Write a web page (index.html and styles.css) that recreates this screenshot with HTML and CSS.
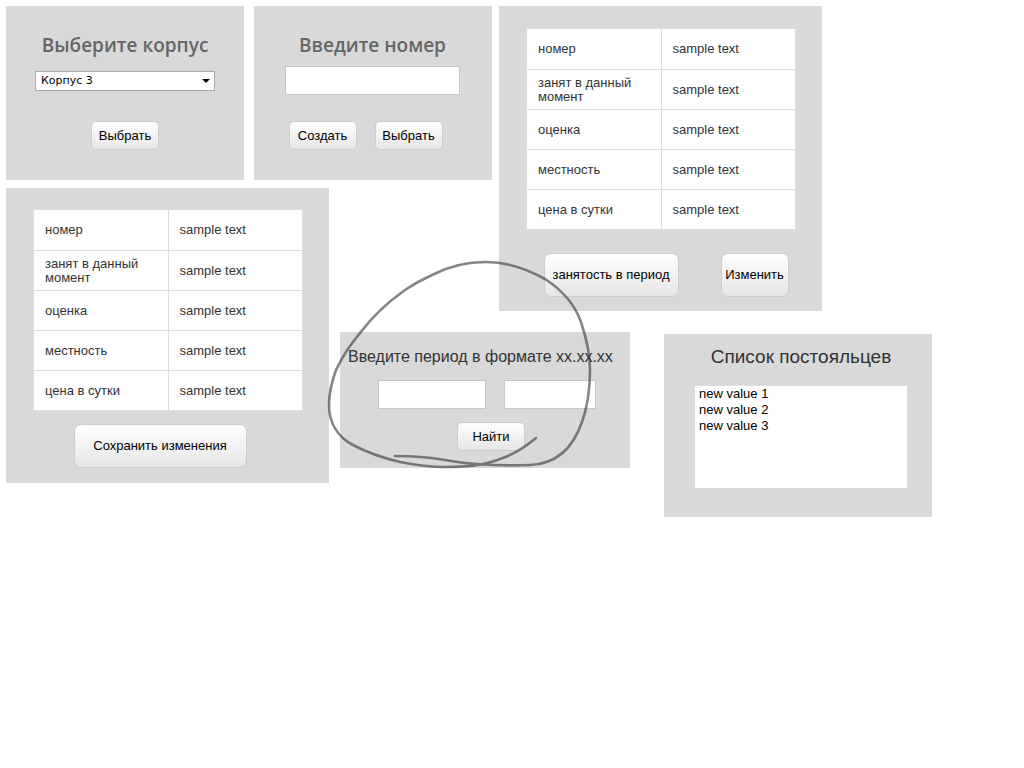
FILE: index.html
```html
<!DOCTYPE html>
<html lang="ru">
<head>
<meta charset="utf-8">
<title>Номера</title>
<link rel="stylesheet" href="styles.css">
</head>
<body>
<main class="board">
  <form class="panel building">
    <h2 class="title"><label for="building">Выберите корпус</label></h2>
    <div class="picker">
      <select id="building"><option>Корпус 3</option></select>
    </div>
    <div class="actions"><button type="button" class="btn">Выбрать</button></div>
  </form>

  <form class="panel room">
    <h2 class="title"><label for="room">Введите номер</label></h2>
    <input class="field" id="room" type="text">
    <div class="actions">
      <button type="button" class="btn">Создать</button>
      <button type="button" class="btn">Выбрать</button>
    </div>
  </form>

  <section class="panel details">
    <table class="props">
      <tr><td>номер</td><td>sample text</td></tr>
      <tr><td>занят в данный момент</td><td>sample text</td></tr>
      <tr><td>оценка</td><td>sample text</td></tr>
      <tr><td>местность</td><td>sample text</td></tr>
      <tr><td>цена в сутки</td><td>sample text</td></tr>
    </table>
    <div class="actions">
      <button type="button" class="btn tall wide">занятость в период</button>
      <button type="button" class="btn tall">Изменить</button>
    </div>
  </section>

  <section class="panel edit">
    <table class="props">
      <tr><td>номер</td><td>sample text</td></tr>
      <tr><td>занят в данный момент</td><td>sample text</td></tr>
      <tr><td>оценка</td><td>sample text</td></tr>
      <tr><td>местность</td><td>sample text</td></tr>
      <tr><td>цена в сутки</td><td>sample text</td></tr>
    </table>
    <div class="actions">
      <button type="button" class="btn tall widest">Сохранить изменения</button>
    </div>
  </section>

  <form class="panel period">
    <h2 class="subtitle">Введите период в формате xx.xx.xx</h2>
    <div class="range">
      <input class="field" type="text" aria-label="Начало периода">
      <input class="field" type="text" aria-label="Конец периода">
    </div>
    <div class="actions"><button type="button" class="btn">Найти</button></div>
  </form>

  <section class="panel guests">
    <h2 class="heading"><label for="guests">Список постояльцев</label></h2>
    <select class="list" id="guests" size="6">
      <option>new value 1</option>
      <option>new value 2</option>
      <option>new value 3</option>
    </select>
  </section>

  <svg class="sketch" viewBox="320 250 290 230" width="290" height="230" aria-hidden="true">
    <path d="M536 438C524 448 512 455 500 459C482 466 465 467 445 467C429 467 415 465 400 462C383 458 368 453 353 445C338 437 329 423 329 405C329 392 332 381 336 370C343 355 350 345 360 333C372 317 388 302 405 290C414 284 423 279 432 275C449 266 465 262 486 262C508 262 527 269 545 279C562 290 575 305 581 322C587 340 590 355 590 370C590 390 587 408 582 422C573 448 556 464 530 465C505 466 472 465 445 460C428 457 412 456 395 456"/>
  </svg>
</main>
</body>
</html>
```
FILE: styles.css
```css
* { box-sizing: border-box; }
body {
  margin: 0;
  background: #fff;
  color: #333;
  font: 13px/14px "Liberation Sans", Arial, sans-serif;
}
h2 { margin: 0; font-weight: normal; text-align: center; white-space: nowrap; }

.board {
  position: relative;
  display: grid;
  grid-template-columns: 238fr 10fr 75fr 11fr 152fr 7fr 131fr 34fr 158fr 110fr 92fr;
  grid-template-rows: auto 1fr auto;
  align-items: start;
  padding: 6px 0 0 6px;
}
.panel {
  display: flex;
  flex-direction: column;
  min-width: 0;
  background: #d9d9d9;
}
.building { grid-area: 1 / 1 / 2 / 2; margin-bottom: 8px; padding: 24px 29px 30px; }
.room { grid-area: 1 / 3 / 2 / 6; margin-bottom: 8px; padding: 24px 32px 30px 31px; }
.details { grid-area: 1 / 7 / 3 / 10; margin-bottom: 21px; padding: 22px 26px 14px 27px; }
.edit { grid-area: 2 / 1 / 4 / 4; padding: 21px 26px 15px 27px; }
.period { grid-area: 3 / 5 / 4 / 8; padding: 15px 8px 17px; }
.guests { grid-area: 3 / 9 / 4 / 11; margin-top: 2px; padding: 13px 24px 28px 30px; }

.title {
  color: #666;
  font: 600 19px/30px "Open Sans", "Noto Sans", sans-serif;
}
.subtitle { font-size: 16px; line-height: 20px; text-align: left; }
.heading { font-size: 19px; line-height: 20px; }

.picker { position: relative; margin-top: 11px; }
.picker::after {
  content: "";
  position: absolute;
  top: 8px;
  right: 5px;
  border: 4px solid transparent;
  border-top-color: #000;
  border-bottom: 0;
  pointer-events: none;
}
.picker select {
  display: block;
  width: 100%;
  height: 20px;
  padding: 0 5px;
  border: 1px solid #aaa;
  border-radius: 0;
  appearance: none;
  background: #fff;
  color: #000;
  font: 11px/18px "DejaVu Sans", Verdana, sans-serif;
}
.field {
  width: 100%;
  min-width: 0;
  height: 29px;
  padding: 4px 6px;
  border: 1px solid #c8c8c8;
  background: #fff;
  font: inherit;
}
.room .field { margin-top: 6px; }

.actions { display: flex; justify-content: center; gap: 18px; }
.building .actions { margin-top: 30px; }
.room .actions { margin-top: 26px; padding-right: 14px; }
.details .actions { margin-top: 23px; padding-left: 10px; gap: 42px; }
.edit .actions { margin-top: 13px; padding-right: 16px; }
.period .actions { margin-top: 13px; padding-left: 12px; }

.btn {
  min-width: 68px;
  height: 29px;
  padding: 0 2px;
  border: 1px solid #ccc;
  border-radius: 5px;
  background: linear-gradient(#fff, #e6e6e6);
  color: #000;
  font: inherit;
  white-space: nowrap;
}
.tall { height: 44px; border-radius: 7px; }
.wide { min-width: 135px; }
.widest { min-width: 173px; }

.props {
  width: 100%;
  table-layout: fixed;
  border-collapse: collapse;
  border: 1px solid #ddd;
  background: #fff;
}
.props td {
  height: 40px;
  padding: 0 11px;
  border: 1px solid #ddd;
}
.props tr:first-child td { height: 41px; }

.range {
  display: grid;
  grid-template-columns: 108fr 92fr;
  gap: 18px;
  margin-top: 13px;
  padding: 0 26px 0 30px;
}

.list {
  width: 100%;
  height: 104px;
  margin-top: 18px;
  padding: 0;
  border: 1px solid #ddd;
  border-radius: 0;
  background: #fff;
  color: #000;
  font: inherit;
  overflow: auto;
}
.list option { min-height: 16px; padding: 0 4px; line-height: 16px; }

/* Pencil mark drawn across the panels */
.sketch {
  position: absolute;
  top: 250px;
  left: 320px;
  pointer-events: none;
}
.sketch path {
  fill: none;
  stroke: #333;
  stroke-opacity: 0.6;
  stroke-width: 2.6;
  stroke-linecap: round;
  stroke-linejoin: round;
}
```
